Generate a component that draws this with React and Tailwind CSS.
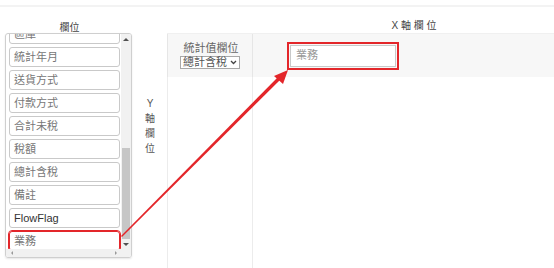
import React from "react";

const items = ["區庫", "統計年月", "送貨方式", "付款方式", "合計未稅", "稅額", "總計含稅", "備註", "FlowFlag", "業務"];

export default function App() {
  return (
    <div
      className="relative w-[554px] h-[268px] overflow-hidden bg-white text-[#555]"
      style={{ fontFamily: '"Liberation Sans", "Noto Sans CJK TC", sans-serif' }}
    >
      <div className="mt-[5px] h-[2px] bg-[#f3f3f3]" />
      <div className="flex">
        {/* left column */}
        <div className="w-[127px] ml-[5px] flex flex-col shrink-0">
          <div className="h-[26px] flex items-end justify-center pl-[2px] pb-[2px] text-[10px] leading-[7px] text-[#444]">欄位</div>
          <div className="h-[225px] border border-[#cfcfcf] rounded-[3px] flex flex-col overflow-hidden shadow-[0_1px_2px_rgba(0,0,0,0.1)]">
            <div className="flex flex-1 min-h-0">
              <div className="flex-1 overflow-hidden pl-[3px] pr-[1px]">
                <div className="flex flex-col gap-[3px] -mt-[10px]">
                  {items.map((t, i) => (
                    <div
                      key={t}
                      className={
                        "h-[20px] shrink-0 rounded-[3px] border bg-white pl-[4px] flex items-center text-[11px] " +
                        (i === items.length - 1
                          ? "border-[#e3262a] outline outline-1 outline-[#e3262a] text-[#777]"
                          : t === "FlowFlag"
                          ? "border-[#c9c9c9] text-[#333]"
                          : "border-[#c9c9c9] text-[#777]")
                      }
                    >
                      {t}
                    </div>
                  ))}
                </div>
              </div>
              {/* vertical scrollbar */}
              <div className="w-[10px] bg-[#f1f1f1] flex flex-col items-center">
                <div className="h-[10px] flex items-center justify-center">
                  <div className="w-0 h-0 border-l-[3px] border-r-[3px] border-b-[3px] border-l-transparent border-r-transparent border-b-[#505050]" />
                </div>
                <div className="h-[104px]" />
                <div className="w-[8px] flex-1 bg-[#c6c6c6]" />
                <div className="h-[10px] flex items-center justify-center">
                  <div className="w-0 h-0 border-l-[3px] border-r-[3px] border-t-[3px] border-l-transparent border-r-transparent border-t-[#505050]" />
                </div>
              </div>
            </div>
            {/* horizontal scrollbar */}
            <div className="h-[8px] bg-[#f1f1f1] flex items-center justify-between pl-[5px] pr-[14px] shrink-0">
              <div className="w-0 h-0 border-t-[2px] border-b-[2px] border-r-[2px] border-t-transparent border-b-transparent border-r-[#999]" />
              <div className="w-0 h-0 border-t-[2px] border-b-[2px] border-l-[2px] border-t-transparent border-b-transparent border-l-[#999]" />
            </div>
          </div>
        </div>

        {/* Y axis label */}
        <div className="w-[35px] shrink-0 pt-[89px] flex flex-col items-center text-[10px] leading-[15px] text-[#555] pl-[1px]">
          <span>Y</span>
          <span>軸</span>
          <span>欄</span>
          <span>位</span>
        </div>

        {/* table area */}
        <div className="flex-1 flex flex-col">
          <div className="h-[26px] flex items-end pb-[4px]">
            <div className="w-[86px]" />
            <div className="flex-1 text-center pl-[21px] text-[10px] leading-[7px] text-[#444] whitespace-pre">X 軸 欄 位</div>
          </div>
          <div className="flex h-[44px] bg-[#f7f7f7] border-t border-[#f0f0f0]">
            <div className="w-[86px] border-l border-r border-[#e6e6e6] flex flex-col items-center justify-center gap-[1px]">
              <div className="text-[11px] leading-[13px] text-[#666] pl-[2px]">統計值欄位</div>
              <div className="h-[13px] border border-[#a8a8a8] bg-white flex items-center px-[2px] gap-[3px] text-[11px] leading-[11px] text-[#555]">
                <span>總計含稅</span>
                <svg width="7" height="5" viewBox="0 0 7 5">
                  <path d="M1 1 L3.5 3.5 L6 1" stroke="#444" strokeWidth="1.3" fill="none" />
                </svg>
              </div>
            </div>
            <div className="flex-1 flex items-center pl-[34px]">
              <div className="border-2 border-[#e3262a] p-[1px]">
                <div className="w-[106px] h-[22px] border border-[#c9c9c9] bg-white flex items-center pl-[5px] text-[11px] text-[#999]">業務</div>
              </div>
            </div>
          </div>
          <div className="flex h-[200px]">
            <div className="w-[86px] border-l border-r border-[#ececec]" />
          </div>
        </div>
      </div>

      {/* red arrow */}
      <svg className="absolute left-0 top-0 pointer-events-none" width="554" height="268" viewBox="0 0 554 268">
        <polygon points="121,236 122,237 281,79 279,76" fill="#e3262a" />
        <polygon points="288,70 274,76 283,84" fill="#e3262a" />
      </svg>
    </div>
  );
}
